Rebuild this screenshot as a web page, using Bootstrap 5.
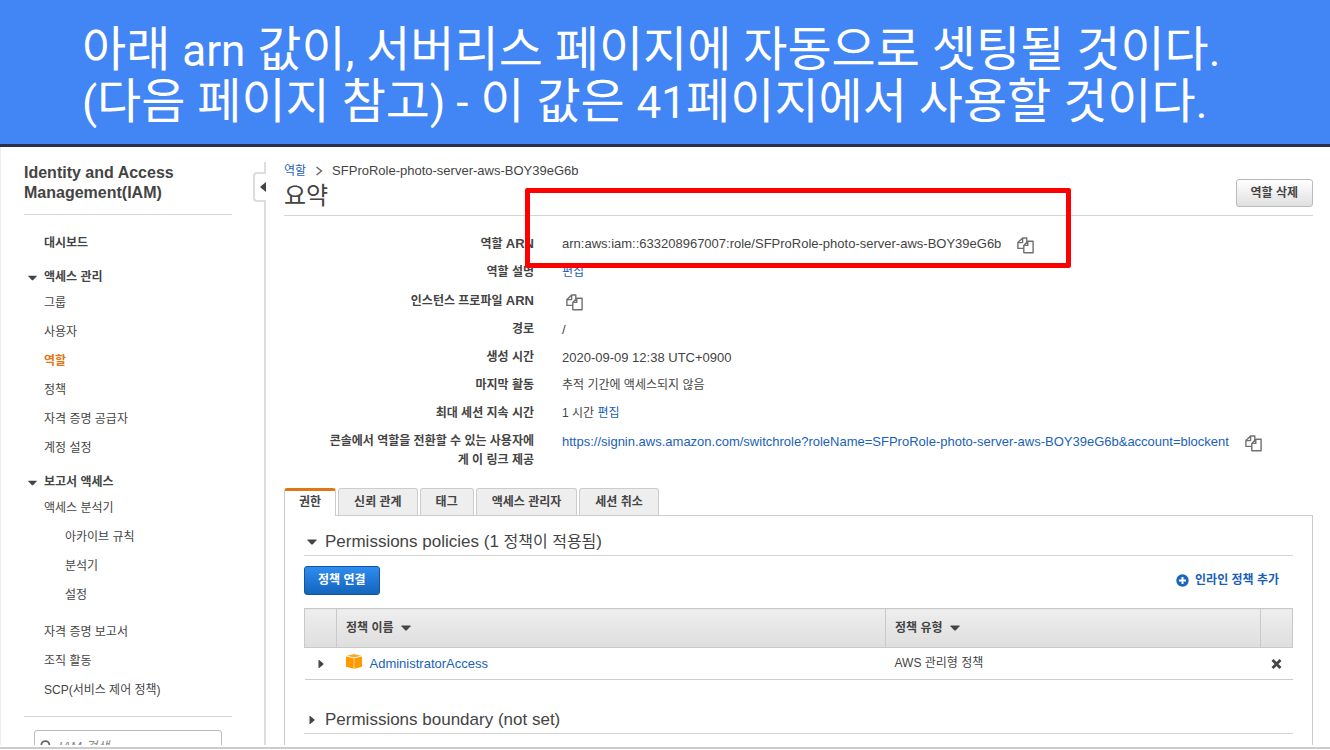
<!DOCTYPE html>
<html lang="ko">
<head>
<meta charset="utf-8">
<meta name="viewport" content="width=device-width, initial-scale=1">
<title>IAM - 역할 요약</title>
<link href="https://cdn.jsdelivr.net/npm/bootstrap@5.3.0/dist/css/bootstrap.min.css" rel="stylesheet">
<style>
  body { font-family: "Liberation Sans", "Noto Sans CJK KR", sans-serif; font-size: 12px; line-height: 19px; color: #444; background: #fff; }
  a { color: #1a5fb8; text-decoration: none; }
  .latin { font-size: 13px; }
  .rule { border-color: #d5d5d5 !important; }

  .slide-title { background: #4285f4; color: #fff; border-bottom: 3px solid #263248; padding: 24px 80px 16px 82px; }
  .slide-title h1 { font-family: Roboto, "Noto Sans CJK KR", sans-serif; font-weight: 400; font-size: 48px; line-height: 52px; margin: 0; }
  .slide-title h1 span { font-size: 44px; line-height: 1; }

  .console { border-left: 1px solid #eee; min-height: 0; }
  .page-end { height: 4px; background: #fff; border-bottom: 2px solid #ccc; margin-bottom: 1px; }

  .side { width: 252px; padding: 16px 21px 0 23px; }
  .side h2 { font-size: 16px; line-height: 20px; font-weight: 700; padding-bottom: 11px; margin-bottom: 14px; }
  .side .nav-link { color: #444; padding: 5px 0 5px 20px; line-height: 19px; }
  .side .nav-link.active { color: #e07714; font-weight: 700; }
  .side .sub { padding-left: 41px; }
  .side .group { color: #444; font-weight: 700; border: 0; background: none; margin: 10px 0 2px; padding: 0 0 0 4px; gap: 7px; line-height: 19px; }
  .side .side-end { margin-top: 11px; }
  .search-box { margin: 13px 10px 0; height: 32px; border: 1px solid #bbb; border-radius: 3px; padding: 0 5px; gap: 6px; }
  .search-box input { font-size: 13px; font-style: italic; outline: 0; }
  .search-box input::placeholder { color: #888; }

  .fold { width: 13px; padding-top: 15px; }
  .fold .seg-top { height: 10px; border-right: 2px solid #ddd; }
  .fold .seg-end { border-right: 2px solid #ddd; }
  .fold button { height: 30px; border: 2px solid #ddd; border-right: 0; border-radius: 4px 0 0 4px; background: #fff; padding: 0 0 0 5px; line-height: 0; }

  .role { padding: 14px 17px 0 18px; min-width: 0; }
  .crumbs { gap: 9px; line-height: 20px; }
  .role h2 { font-size: 24px; line-height: 30px; margin: 0; font-weight: 400; }
  .btn-plain { font-size: 12px; font-weight: 700; line-height: 18px; color: #444; padding: 4px 14px; border: 1px solid #bbb; border-radius: 3px; background: linear-gradient(#fff, #e0e0e0); }
  .btn-main { font-size: 12px; font-weight: 700; line-height: 19px; color: #fff; padding: 4px 13px; border: 1px solid #15539b; border-radius: 3px; background: linear-gradient(#2f8df0, #1464bb); }

  .facts { display: grid; grid-template-columns: 250px 1fr; column-gap: 28px; row-gap: 9px; margin: 18px 0 18px; }
  .facts dt { text-align: right; padding-left: 38px; }
  .facts dd { margin: 0; }
  .copy-row { gap: 16px; }
  .copy { border: 0; background: none; padding: 3px 0 0; line-height: 0; height: 19px; }
  .marker { inset: -46px -37px -15px -37px; border: 5px solid #f00; border-radius: 2px; pointer-events: none; z-index: 2; }

  .role .nav-tabs { gap: 2px; border: 0; }
  .role .nav-tabs .nav-link { color: #444; font-weight: 700; background: #eee; border: 1px solid #ccc; border-bottom: 0; border-radius: 3px 3px 0 0; padding: 4px 15px 3px; margin: 0; }
  .role .nav-tabs .nav-link.active { background: #fff; border-top: 3px solid #e07714; padding: 2px 14px 4px; margin-bottom: -1px; z-index: 1; }
  .panel { border: 1px solid #ccc; border-bottom: 0; padding: 14px 19px 0; }
  .panel h3 { font-size: 17px; line-height: 24px; font-weight: 400; margin: 0; padding: 0 0 1px 3px; gap: 8px; }
  .panel h3 .ko { font-size: 16px; }
  .panel-tools { margin-top: 10px; }
  .add-inline { font-weight: 700; gap: 6px; padding-right: 14px; }

  .policies { font-size: 12px; margin: 13px 0 28px; table-layout: fixed; width: 100%; border-collapse: collapse; }
  .policies th { height: 39px; padding: 0 9px; border: 1px solid #c9c9c9; background: linear-gradient(#eee, #dedede); }
  .policies td { height: 32px; padding: 0 9px; border-bottom: 1px solid #ccc; }
  .c-fold, .c-del { width: 32px; }
  .c-type { width: 375px; }
  .bare { border: 0; background: none; padding: 0; line-height: 0; }
</style>
</head>
<body class="vh-100 d-flex flex-column overflow-hidden">

<svg class="d-none" aria-hidden="true">
  <symbol id="copy" viewBox="0 0 17 17"><g fill="#fff" stroke="#707070" stroke-width="1.4" stroke-linejoin="round"><path d="M5.6 1h4.2v10.4H.9V5.6zM5.6 1v4.6H.9"/><path d="M10.8 4.2h5.3v11.6H6.8V8.4zM10.8 4.2v4.2h-4"/></g></symbol>
  <symbol id="down" viewBox="0 0 10 6"><path d="M.5 0.5h9v.7L5.6 5.4H4.4L.5 1.2z" fill="#444"/></symbol>
  <symbol id="right" viewBox="0 0 6 10"><path d="M.5 1h.7L5.4 4.6v.8L1.2 9H.5z" fill="#444"/></symbol>
</svg>

<header class="slide-title flex-shrink-0">
  <h1>아래 <span>arn</span> 값이<span>,</span> 서버리스 페이지에 자동으로 셋팅될 것이다<span>.</span><br><span>(</span>다음 페이지 참고<span>) -</span> 이 값은 <span>41</span>페이지에서 사용할 것이다<span>.</span></h1>
</header>

<div class="console d-flex flex-fill overflow-hidden">
  <aside class="side flex-shrink-0">
    <h2 class="border-bottom rule">Identity and Access Management(IAM)</h2>
    <nav class="nav flex-column flex-nowrap">
      <a class="nav-link fw-bold" href="#">대시보드</a>
      <button class="group d-flex align-items-center" type="button"><svg width="9" height="6"><use href="#down"/></svg><span>액세스 관리</span></button>
      <a class="nav-link" href="#">그룹</a>
      <a class="nav-link" href="#">사용자</a>
      <a class="nav-link active" href="#" aria-current="page">역할</a>
      <a class="nav-link" href="#">정책</a>
      <a class="nav-link" href="#">자격 증명 공급자</a>
      <a class="nav-link" href="#">계정 설정</a>
      <button class="group d-flex align-items-center" type="button"><svg width="9" height="6"><use href="#down"/></svg><span>보고서 액세스</span></button>
      <a class="nav-link" href="#">액세스 분석기</a>
      <a class="nav-link sub" href="#">아카이브 규칙</a>
      <a class="nav-link sub" href="#">분석기</a>
      <a class="nav-link sub" href="#">설정</a>
      <a class="nav-link mt-2" href="#">자격 증명 보고서</a>
      <a class="nav-link" href="#">조직 활동</a>
      <a class="nav-link" href="#">SCP(서비스 제어 정책)</a>
    </nav>
    <div class="side-end border-top rule"></div>
    <label class="search-box d-flex align-items-center">
      <svg width="14" height="14" viewBox="0 0 14 14" fill="none" stroke="#666" stroke-width="2"><circle cx="6" cy="6" r="4.5"/><path d="M9.5 9.5l4 4"/></svg>
      <input class="border-0 bg-transparent p-0 w-100" type="search" placeholder="IAM 검색" aria-label="IAM 검색">
    </label>
  </aside>

  <div class="fold d-flex flex-column flex-shrink-0">
    <div class="seg-top"></div>
    <button type="button" aria-label="탐색 창 접기"><svg width="6" height="10" viewBox="0 0 6 10"><path d="M6 0v10L.5 5.6V4.4z" fill="#444"/></svg></button>
    <div class="seg-end flex-fill"></div>
  </div>

  <main class="role flex-fill">
    <div class="d-flex justify-content-between align-items-end border-bottom rule pb-1">
      <div>
        <nav class="crumbs d-flex align-items-center" aria-label="위치">
          <a href="#">역할</a>
          <svg width="8" height="10" viewBox="0 0 8 10" fill="none" stroke="#666" stroke-width="1.4"><path d="M1.5 1l5 4-5 4"/></svg>
          <span class="latin">SFProRole-photo-server-aws-BOY39eG6b</span>
        </nav>
        <h2>요약</h2>
      </div>
      <button class="btn btn-plain mb-1" type="button">역할 삭제</button>
    </div>

    <dl class="facts">
      <dt>역할 <span class="latin">ARN</span></dt>
      <dd><div class="copy-row d-inline-flex position-relative"><span class="latin">arn:aws:iam::633208967007:role/SFProRole-photo-server-aws-BOY39eG6b</span><button class="copy" type="button" aria-label="복사"><svg width="17" height="17"><use href="#copy"/></svg></button><div class="marker position-absolute"></div></div></dd>
      <dt>역할 설명</dt>
      <dd><a href="#">편집</a></dd>
      <dt>인스턴스 프로파일 <span class="latin">ARN</span></dt>
      <dd class="d-flex"><button class="copy ms-1" type="button" aria-label="복사"><svg width="17" height="17"><use href="#copy"/></svg></button></dd>
      <dt>경로</dt>
      <dd class="latin">/</dd>
      <dt>생성 시간</dt>
      <dd class="latin">2020-09-09 12:38 UTC+0900</dd>
      <dt>마지막 활동</dt>
      <dd>추적 기간에 액세스되지 않음</dd>
      <dt>최대 세션 지속 시간</dt>
      <dd>1 시간 <a href="#">편집</a></dd>
      <dt>콘솔에서 역할을 전환할 수 있는 사용자에게 이 링크 제공</dt>
      <dd><div class="copy-row d-inline-flex"><a class="latin" href="#">https://signin.aws.amazon.com/switchrole?roleName=SFProRole-photo-server-aws-BOY39eG6b&amp;account=blockent</a><button class="copy" type="button" aria-label="복사"><svg width="17" height="17"><use href="#copy"/></svg></button></div></dd>
    </dl>

    <div class="nav nav-tabs" role="tablist">
      <button class="nav-link active" type="button" role="tab" aria-selected="true">권한</button>
      <button class="nav-link" type="button" role="tab">신뢰 관계</button>
      <button class="nav-link" type="button" role="tab">태그</button>
      <button class="nav-link" type="button" role="tab">액세스 관리자</button>
      <button class="nav-link" type="button" role="tab">세션 취소</button>
    </div>

    <section class="panel">
      <h3 class="d-flex align-items-center border-bottom rule"><svg width="10" height="6"><use href="#down"/></svg><span>Permissions policies (1 <span class="ko">정책이 적용됨</span>)</span></h3>
      <div class="panel-tools d-flex justify-content-between align-items-center">
        <button class="btn btn-main" type="button">정책 연결</button>
        <a class="add-inline d-flex align-items-center" href="#"><svg width="13" height="13" viewBox="0 0 13 13"><circle cx="6.5" cy="6.5" r="6.2" fill="#1a66b8"/><path d="M6.5 3v7M3 6.5h7" stroke="#fff" stroke-width="2"/></svg>인라인 정책 추가</a>
      </div>
      <table class="policies">
        <colgroup><col class="c-fold"><col><col class="c-type"><col class="c-del"></colgroup>
        <thead>
          <tr><th></th><th>정책 이름 <svg class="ms-1" width="10" height="6"><use href="#down"/></svg></th><th>정책 유형 <svg class="ms-1" width="10" height="6"><use href="#down"/></svg></th><th></th></tr>
        </thead>
        <tbody>
          <tr>
            <td class="text-center"><button class="bare" type="button" aria-label="펼치기"><svg width="6" height="10"><use href="#right"/></svg></button></td>
            <td><div class="d-flex align-items-center gap-2"><svg class="mb-1" width="16" height="15" viewBox="0 0 16 15"><path d="M0 2.4L7.7 4.2v10.6L0 12.8zM16 2.4L8.3 4.2v10.6l7.7-2z" fill="#f90"/><path d="M.8 1.8L8 0l7.2 1.8L8 3.6z" fill="#fca62c"/></svg><a class="latin" href="#">AdministratorAccess</a></div></td>
            <td>AWS 관리형 정책</td>
            <td class="text-center"><button class="bare" type="button" aria-label="분리"><svg width="11" height="10" viewBox="0 0 11 10"><path d="M1.5 1l8 8M9.5 1l-8 8" stroke="#444" stroke-width="2.8"/></svg></button></td>
          </tr>
        </tbody>
      </table>
      <h3 class="d-flex align-items-center border-bottom rule"><svg width="10" height="10"><use href="#right"/></svg><span>Permissions boundary (not set)</span></h3>
      <div class="pt-5"></div>
    </section>
  </main>
</div>
<div class="page-end flex-shrink-0"></div>

<script src="https://cdn.jsdelivr.net/npm/bootstrap@5.3.0/dist/js/bootstrap.bundle.min.js"></script>
</body>
</html>
